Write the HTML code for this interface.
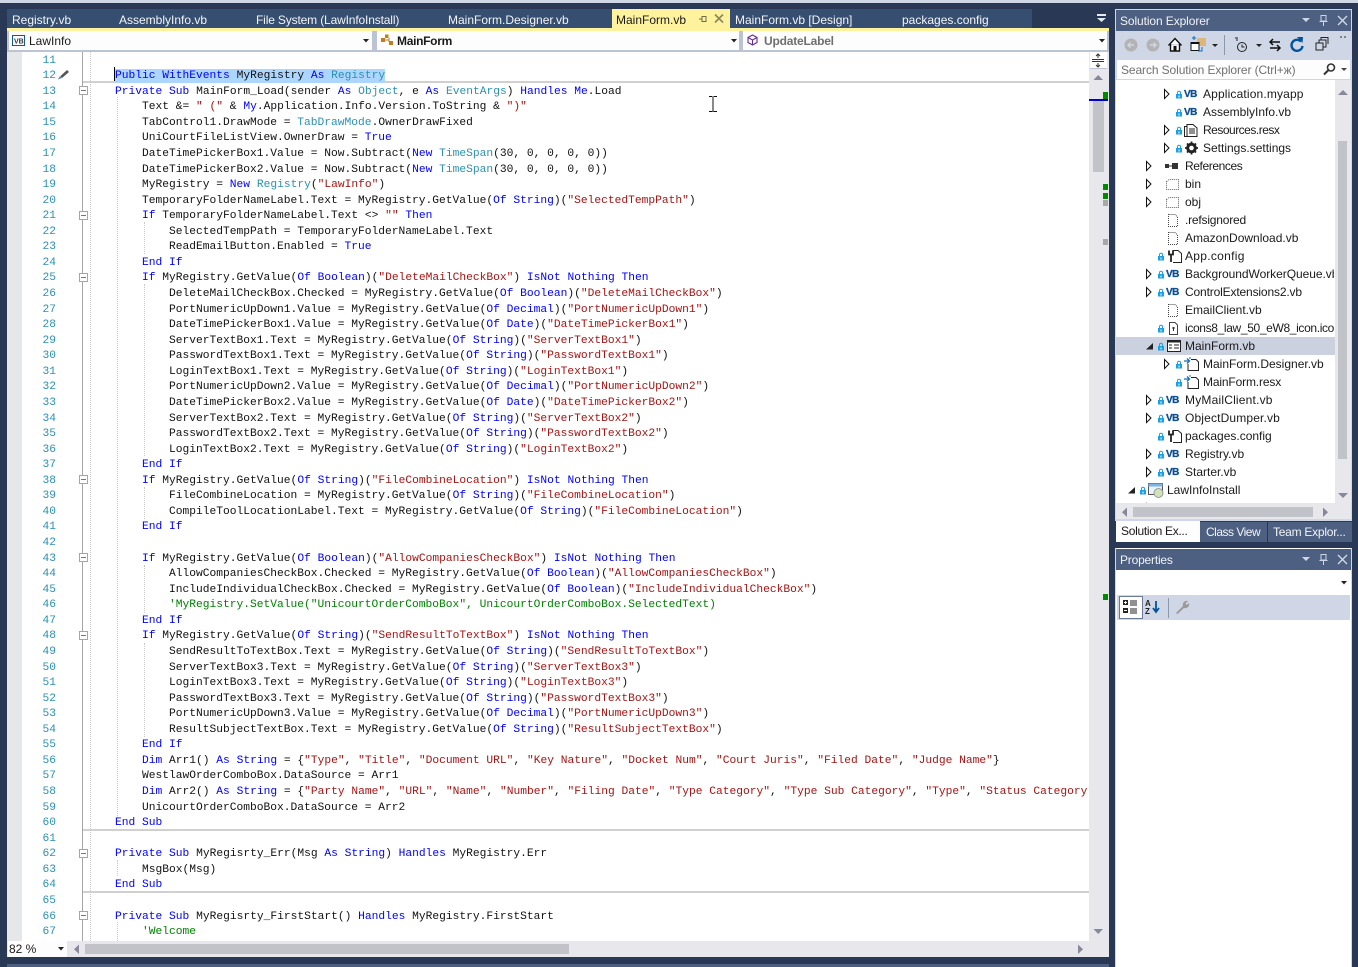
<!DOCTYPE html>
<html><head><meta charset="utf-8"><title>MainForm.vb</title>
<style>
html,body{margin:0;padding:0}
body{width:1358px;height:967px;position:relative;overflow:hidden;background:#293955;font-family:"Liberation Sans",sans-serif;font-size:12px;color:#1a1a1a}
.a{position:absolute}
.tab{position:absolute;top:12px;color:#f3f5f9;font-size:12px;line-height:16px;white-space:nowrap}
.nav{position:absolute;top:31px;height:19px;background:#fdfdfd}
.nt{position:absolute;top:33px;line-height:16px;white-space:nowrap}
pre{margin:0;font-family:"Liberation Mono",monospace;font-size:11.25px;line-height:15.57px;position:absolute;top:53.6px}
#code{left:88px;width:1001px;height:887.4px;overflow:hidden;color:#111}
#nums{left:22px;width:34px;text-align:right;color:#2b91af;height:887.4px;overflow:hidden}
.k{color:#0000ff}.t{color:#2b91af}.s{color:#a31515}.c{color:#008000}
.sel{background:#add6ff;padding:1px 0}
.g{position:absolute;width:0;border-left:1px dotted #c8c8c8}
.hl{position:absolute;left:83px;width:1006px;height:2px;background:#d0d0d0}
.box{position:absolute;left:79px;width:7px;height:7px;border:1px solid #a5a5a5;background:#fff}
.box:after{content:"";position:absolute;left:1px;top:3px;width:5px;height:1px;background:#777}
.r{position:absolute;left:1116px;width:218px;height:18px;line-height:18px;white-space:nowrap;overflow:hidden}
.r span.x{position:absolute;top:0}
.r svg{position:absolute;top:0}
.vb{position:absolute;font-weight:bold;font-size:10px;color:#0e4f92;top:1px;letter-spacing:-.6px;-webkit-text-stroke:.3px #0e4f92}
.pt{position:absolute;color:#f1f3f7;white-space:nowrap;line-height:16px}
</style></head><body>
<svg width="0" height="0" style="position:absolute">
<defs>
<symbol id="ar" viewBox="0 0 8 18"><path d="M1.5 4.5 L6 9 L1.5 13.5 Z" fill="#fff" stroke="#111"/></symbol>
<symbol id="ad" viewBox="0 0 10 18"><path d="M1 12.5 L8 12.5 L8 6 Z" fill="#222"/></symbol>
<symbol id="lk" viewBox="0 0 8 18"><rect x="0" y="9" width="6" height="4.5" fill="#1ba1e2"/><path d="M1.5 9.5V7.7a1.5 1.5 0 0 1 3 0V9.5" fill="none" stroke="#1ba1e2" stroke-width="1"/><rect x="2.5" y="10.5" width="1" height="2" fill="#fff"/></symbol>
<symbol id="dd" viewBox="0 0 14 18"><path d="M2.5 3.5H9L11.5 6V15.5H2.5Z" fill="none" stroke="#444" stroke-dasharray="1 1"/></symbol>
<symbol id="df" viewBox="0 0 16 18"><path d="M1.5 6.5L4 4.5H13.5V14.5H1.5Z" fill="none" stroke="#666" stroke-dasharray="1 1"/></symbol>
<symbol id="cfg" viewBox="0 0 18 18"><path d="M6.5 3.5H12L15.5 6.5V15.5H7" fill="#fff" stroke="#222"/><path d="M3 3.5V7.5H7V3.5M5 7.5V15" fill="none" stroke="#222" stroke-width="1.8"/></symbol>
<symbol id="ds" viewBox="0 0 18 18"><path d="M8 4.5H13L15.5 7V15.5H5V9" fill="#fff" stroke="#222"/><path d="M1 6H6M4 3.5L6.5 6L4 8.5" fill="none" stroke="#1a6fb5" stroke-width="1.3"/><path d="M7 2v2" stroke="#1a6fb5"/></symbol>
</defs></svg>

<!-- top strip -->
<div class="a" style="left:0;top:0;width:1358px;height:3px;background:#cfd6e5"></div>

<!-- tab strip -->
<div class="a" style="left:7px;top:9px;width:1025px;height:19px;background:#364e6f"></div>
<div class="a" style="left:612px;top:9px;width:118px;height:19px;background:#fff29d"></div>
<div class="a" style="left:7px;top:28px;width:1102px;height:3px;background:#fff29d"></div>
<div class="tab" style="left:12px">Registry.vb</div>
<div class="tab" style="left:119px">AssemblyInfo.vb</div>
<div class="tab" style="left:256px;letter-spacing:-.15px">File System (LawInfoInstall)</div>
<div class="tab" style="left:448px">MainForm.Designer.vb</div>
<div class="tab" style="left:616px;color:#1a1a1a">MainForm.vb</div>
<div class="tab" style="left:735px">MainForm.vb [Design]</div>
<div class="tab" style="left:902px">packages.config</div>
<svg class="a" style="left:696px;top:13px" width="30" height="12"><path d="M3 6H6M6 3.5H10V8.5H6ZM6 3V9" fill="none" stroke="#6d6a4a"/><path d="M19 1.5L27 9.5M27 1.5L19 9.5" stroke="#8a8660" stroke-width="1.6"/></svg>
<svg class="a" style="left:1097px;top:14px" width="10" height="9"><rect width="9" height="2" y="0" fill="#e6e9f0"/><path d="M0 4H9L4.5 8Z" fill="#e6e9f0"/></svg>

<!-- navigation bar -->
<div class="a" style="left:7px;top:31px;width:1102px;height:21px;background:#bcc4d4"></div>
<div class="nav" style="left:9px;width:363px"></div>
<div class="nav" style="left:377px;width:362px"></div>
<div class="nav" style="left:743px;width:364px"></div>
<svg class="a" style="left:12px;top:34px" width="14" height="13"><rect x=".5" y="1.5" width="12" height="10" fill="#fff" stroke="#0e5a9e"/><text x="2" y="9.5" font-family="Liberation Sans" font-size="7" font-weight="bold" fill="#333">VB</text></svg>
<div class="nt" style="left:29px">LawInfo</div>
<svg class="a" style="left:380px;top:33px" width="15" height="14"><path d="M1 5h4v4H1zM5 1.5h3.5v3.5H5zM9 8h4v4H9z" fill="#c27d1a"/><path d="M5 7H9M9 5V9" stroke="#c27d1a"/></svg>
<div class="nt" style="left:397px;font-weight:bold;letter-spacing:-.3px">MainForm</div>
<svg class="a" style="left:747px;top:34px" width="12" height="12"><path d="M5.5 1L10 3.5V8.5L5.5 11L1 8.5V3.5ZM1 3.5L5.5 6L10 3.5M5.5 6V11" fill="none" stroke="#652d90" stroke-width="1.1"/></svg>
<div class="nt" style="left:764px;font-weight:bold;color:#6f6f6f;letter-spacing:-.2px">UpdateLabel</div>
<svg class="a" style="left:362px;top:38px" width="8" height="6"><path d="M1 1H7L4 4.5Z" fill="#222"/></svg>
<svg class="a" style="left:730px;top:38px" width="8" height="6"><path d="M1 1H7L4 4.5Z" fill="#222"/></svg>
<svg class="a" style="left:1098px;top:38px" width="8" height="6"><path d="M1 1H7L4 4.5Z" fill="#222"/></svg>

<!-- editor -->
<div class="a" style="left:7px;top:52px;width:1102px;height:905px;background:#e8e8ec"></div>
<div class="a" style="left:8px;top:52px;width:14px;height:889px;background:#e6e7e8"></div>
<div class="a" style="left:22px;top:52px;width:1067px;height:889px;background:#fff"></div>
<div class="a" style="left:82px;top:52px;width:1px;height:889px;background:#a5a5a5"></div>

<!-- guides -->
<div class="g" style="left:90px;top:52px;height:889px"></div>
<div class="g" style="left:117px;top:97px;height:721px"></div>
<div class="g" style="left:117px;top:860px;height:16px"></div>
<div class="g" style="left:117px;top:922px;height:19px"></div>
<div class="g" style="left:144px;top:222px;height:32px"></div>
<div class="g" style="left:144px;top:284px;height:172px"></div>
<div class="g" style="left:144px;top:487px;height:32px"></div>
<div class="g" style="left:144px;top:565px;height:48px"></div>
<div class="g" style="left:144px;top:643px;height:94px"></div>

<div class="hl" style="top:81px"></div>
<div class="hl" style="top:829px"></div>
<div class="hl" style="top:891px"></div>

<div class="box" style="top:86px"></div>
<div class="box" style="top:211px"></div>
<div class="box" style="top:273px"></div>
<div class="box" style="top:475px"></div>
<div class="box" style="top:553px"></div>
<div class="box" style="top:631px"></div>
<div class="box" style="top:849px"></div>
<div class="box" style="top:911px"></div>

<pre id="nums">11
12
13
14
15
16
17
18
19
20
21
22
23
24
25
26
27
28
29
30
31
32
33
34
35
36
37
38
39
40
41
42
43
44
45
46
47
48
49
50
51
52
53
54
55
56
57
58
59
60
61
62
63
64
65
66
67</pre>
<svg class="a" style="left:57px;top:68px" width="14" height="13"><path d="M1 11.5L3 8L5 10Z" fill="#5a7fa8"/><path d="M3.5 8L10 2L12 4L5 10Z" fill="#555"/></svg>

<pre id="code">

    <span class="sel"><span class="k">Public</span> <span class="k">WithEvents</span> MyRegistry <span class="k">As</span> <span class="t">Registry</span></span>
    <span class="k">Private</span> <span class="k">Sub</span> MainForm_Load(sender <span class="k">As</span> <span class="t">Object</span>, e <span class="k">As</span> <span class="t">EventArgs</span>) <span class="k">Handles</span> <span class="k">Me</span>.Load
        Text &amp;= <span class="s">" ("</span> &amp; <span class="k">My</span>.Application.Info.Version.ToString &amp; <span class="s">")"</span>
        TabControl1.DrawMode = <span class="t">TabDrawMode</span>.OwnerDrawFixed
        UniCourtFileListView.OwnerDraw = <span class="k">True</span>
        DateTimePickerBox1.Value = Now.Subtract(<span class="k">New</span> <span class="t">TimeSpan</span>(30, 0, 0, 0, 0))
        DateTimePickerBox2.Value = Now.Subtract(<span class="k">New</span> <span class="t">TimeSpan</span>(30, 0, 0, 0, 0))
        MyRegistry = <span class="k">New</span> <span class="t">Registry</span>(<span class="s">"LawInfo"</span>)
        TemporaryFolderNameLabel.Text = MyRegistry.GetValue(<span class="k">Of</span> <span class="k">String</span>)(<span class="s">"SelectedTempPath"</span>)
        <span class="k">If</span> TemporaryFolderNameLabel.Text &lt;&gt; <span class="s">""</span> <span class="k">Then</span>
            SelectedTempPath = TemporaryFolderNameLabel.Text
            ReadEmailButton.Enabled = <span class="k">True</span>
        <span class="k">End</span> <span class="k">If</span>
        <span class="k">If</span> MyRegistry.GetValue(<span class="k">Of</span> <span class="k">Boolean</span>)(<span class="s">"DeleteMailCheckBox"</span>) <span class="k">IsNot</span> <span class="k">Nothing</span> <span class="k">Then</span>
            DeleteMailCheckBox.Checked = MyRegistry.GetValue(<span class="k">Of</span> <span class="k">Boolean</span>)(<span class="s">"DeleteMailCheckBox"</span>)
            PortNumericUpDown1.Value = MyRegistry.GetValue(<span class="k">Of</span> <span class="k">Decimal</span>)(<span class="s">"PortNumericUpDown1"</span>)
            DateTimePickerBox1.Value = MyRegistry.GetValue(<span class="k">Of</span> <span class="k">Date</span>)(<span class="s">"DateTimePickerBox1"</span>)
            ServerTextBox1.Text = MyRegistry.GetValue(<span class="k">Of</span> <span class="k">String</span>)(<span class="s">"ServerTextBox1"</span>)
            PasswordTextBox1.Text = MyRegistry.GetValue(<span class="k">Of</span> <span class="k">String</span>)(<span class="s">"PasswordTextBox1"</span>)
            LoginTextBox1.Text = MyRegistry.GetValue(<span class="k">Of</span> <span class="k">String</span>)(<span class="s">"LoginTextBox1"</span>)
            PortNumericUpDown2.Value = MyRegistry.GetValue(<span class="k">Of</span> <span class="k">Decimal</span>)(<span class="s">"PortNumericUpDown2"</span>)
            DateTimePickerBox2.Value = MyRegistry.GetValue(<span class="k">Of</span> <span class="k">Date</span>)(<span class="s">"DateTimePickerBox2"</span>)
            ServerTextBox2.Text = MyRegistry.GetValue(<span class="k">Of</span> <span class="k">String</span>)(<span class="s">"ServerTextBox2"</span>)
            PasswordTextBox2.Text = MyRegistry.GetValue(<span class="k">Of</span> <span class="k">String</span>)(<span class="s">"PasswordTextBox2"</span>)
            LoginTextBox2.Text = MyRegistry.GetValue(<span class="k">Of</span> <span class="k">String</span>)(<span class="s">"LoginTextBox2"</span>)
        <span class="k">End</span> <span class="k">If</span>
        <span class="k">If</span> MyRegistry.GetValue(<span class="k">Of</span> <span class="k">String</span>)(<span class="s">"FileCombineLocation"</span>) <span class="k">IsNot</span> <span class="k">Nothing</span> <span class="k">Then</span>
            FileCombineLocation = MyRegistry.GetValue(<span class="k">Of</span> <span class="k">String</span>)(<span class="s">"FileCombineLocation"</span>)
            CompileToolLocationLabel.Text = MyRegistry.GetValue(<span class="k">Of</span> <span class="k">String</span>)(<span class="s">"FileCombineLocation"</span>)
        <span class="k">End</span> <span class="k">If</span>

        <span class="k">If</span> MyRegistry.GetValue(<span class="k">Of</span> <span class="k">Boolean</span>)(<span class="s">"AllowCompaniesCheckBox"</span>) <span class="k">IsNot</span> <span class="k">Nothing</span> <span class="k">Then</span>
            AllowCompaniesCheckBox.Checked = MyRegistry.GetValue(<span class="k">Of</span> <span class="k">Boolean</span>)(<span class="s">"AllowCompaniesCheckBox"</span>)
            IncludeIndividualCheckBox.Checked = MyRegistry.GetValue(<span class="k">Of</span> <span class="k">Boolean</span>)(<span class="s">"IncludeIndividualCheckBox"</span>)
            <span class="c">'MyRegistry.SetValue("UnicourtOrderComboBox", UnicourtOrderComboBox.SelectedText)</span>
        <span class="k">End</span> <span class="k">If</span>
        <span class="k">If</span> MyRegistry.GetValue(<span class="k">Of</span> <span class="k">String</span>)(<span class="s">"SendResultToTextBox"</span>) <span class="k">IsNot</span> <span class="k">Nothing</span> <span class="k">Then</span>
            SendResultToTextBox.Text = MyRegistry.GetValue(<span class="k">Of</span> <span class="k">String</span>)(<span class="s">"SendResultToTextBox"</span>)
            ServerTextBox3.Text = MyRegistry.GetValue(<span class="k">Of</span> <span class="k">String</span>)(<span class="s">"ServerTextBox3"</span>)
            LoginTextBox3.Text = MyRegistry.GetValue(<span class="k">Of</span> <span class="k">String</span>)(<span class="s">"LoginTextBox3"</span>)
            PasswordTextBox3.Text = MyRegistry.GetValue(<span class="k">Of</span> <span class="k">String</span>)(<span class="s">"PasswordTextBox3"</span>)
            PortNumericUpDown3.Value = MyRegistry.GetValue(<span class="k">Of</span> <span class="k">Decimal</span>)(<span class="s">"PortNumericUpDown3"</span>)
            ResultSubjectTextBox.Text = MyRegistry.GetValue(<span class="k">Of</span> <span class="k">String</span>)(<span class="s">"ResultSubjectTextBox"</span>)
        <span class="k">End</span> <span class="k">If</span>
        <span class="k">Dim</span> Arr1() <span class="k">As</span> <span class="k">String</span> = {<span class="s">"Type"</span>, <span class="s">"Title"</span>, <span class="s">"Document URL"</span>, <span class="s">"Key Nature"</span>, <span class="s">"Docket Num"</span>, <span class="s">"Court Juris"</span>, <span class="s">"Filed Date"</span>, <span class="s">"Judge Name"</span>}
        WestlawOrderComboBox.DataSource = Arr1
        <span class="k">Dim</span> Arr2() <span class="k">As</span> <span class="k">String</span> = {<span class="s">"Party Name"</span>, <span class="s">"URL"</span>, <span class="s">"Name"</span>, <span class="s">"Number"</span>, <span class="s">"Filing Date"</span>, <span class="s">"Type Category"</span>, <span class="s">"Type Sub Category"</span>, <span class="s">"Type"</span>, <span class="s">"Status Category"</span>, <span class="s">"Status"</span>}
        UnicourtOrderComboBox.DataSource = Arr2
    <span class="k">End</span> <span class="k">Sub</span>

    <span class="k">Private</span> <span class="k">Sub</span> MyRegisrty_Err(Msg <span class="k">As</span> <span class="k">String</span>) <span class="k">Handles</span> MyRegistry.Err
        MsgBox(Msg)
    <span class="k">End</span> <span class="k">Sub</span>

    <span class="k">Private</span> <span class="k">Sub</span> MyRegisrty_FirstStart() <span class="k">Handles</span> MyRegistry.FirstStart
        <span class="c">'Welcome</span></pre>
<div class="a" style="left:114px;top:67px;width:1px;height:14px;background:#000"></div>

<!-- editor v-scroll -->
<div class="a" style="left:1089px;top:52px;width:19px;height:889px;background:#e8e8ec"></div>
<div class="a" style="left:1090px;top:52px;width:17px;height:16px;background:#fdfdfd;border-bottom:1px solid #bcc4d4"></div>
<svg class="a" style="left:1091px;top:53px" width="15" height="15"><path d="M1 6.5H13M1 8.5H13" stroke="#333"/><path d="M7 1V5M5 3L7 1L9 3M7 10V14M5 12L7 14L9 12" fill="none" stroke="#333"/></svg>
<svg class="a" style="left:1093px;top:74px" width="11" height="7"><path d="M0.5 6H10L5.2 1Z" fill="#868999"/></svg>
<div class="a" style="left:1103px;top:92px;width:5px;height:7px;background:#008a00"></div>
<div class="a" style="left:1089px;top:99px;width:19px;height:2px;background:#0000cc"></div>
<div class="a" style="left:1093px;top:101px;width:11px;height:71px;background:#c2c3c9"></div>
<div class="a" style="left:1103px;top:184px;width:5px;height:6px;background:#008a00"></div>
<div class="a" style="left:1103px;top:193px;width:5px;height:6px;background:#008a00"></div>
<div class="a" style="left:1103px;top:200px;width:5px;height:6px;background:#a8a8a8"></div>
<div class="a" style="left:1103px;top:239px;width:5px;height:6px;background:#a8a8a8"></div>
<div class="a" style="left:1103px;top:594px;width:5px;height:6px;background:#008a00"></div>
<svg class="a" style="left:1093px;top:928px" width="11" height="7"><path d="M0.5 1H10L5.2 6Z" fill="#868999"/></svg>

<!-- bottom bar -->
<div class="a" style="left:8px;top:941px;width:58px;height:16px;padding-left:1px;background:#fdfdfd;font-size:12px;line-height:16px;color:#1a1a1a">82 %</div>
<svg class="a" style="left:57px;top:946px" width="8" height="6"><path d="M1 1H7L4 4.5Z" fill="#222"/></svg>
<div class="a" style="left:67px;top:941px;width:1022px;height:16px;background:#e8e8ec"></div>
<svg class="a" style="left:73px;top:944px" width="7" height="11"><path d="M6 0.5V10L1 5.2Z" fill="#868999"/></svg>
<div class="a" style="left:85px;top:944px;width:484px;height:10px;background:#c2c3c9"></div>
<svg class="a" style="left:1077px;top:944px" width="7" height="11"><path d="M1 0.5V10L6 5.2Z" fill="#868999"/></svg>
<div class="a" style="left:7px;top:964px;width:1102px;height:3px;background:#4d6082"></div>

<!-- Solution Explorer -->
<div class="a" style="left:1115px;top:9px;width:237px;height:512px;background:#cfd6e5"></div>
<div class="a" style="left:1116px;top:10px;width:235px;height:21px;background:#4d6082"></div>
<div class="pt" style="left:1120px;top:13px;letter-spacing:-.1px">Solution Explorer</div>
<svg class="a" style="left:1301px;top:14px" width="48" height="13"><path d="M1 4H9L5 8Z" fill="#cfd6e5"/><path d="M20 1.5H25V7H20ZM18.5 7.5H26.5M22.5 8V12" fill="none" stroke="#cfd6e5"/><path d="M37 2L46 11M46 2L37 11" stroke="#cfd6e5" stroke-width="1.4"/></svg>

<!-- toolbar -->
<svg class="a" style="left:1122px;top:33px" width="228" height="26">
<circle cx="9" cy="12" r="6.5" fill="#b3b3b3"/><path d="M6 12H12M8.5 9.5L6 12L8.5 14.5" fill="none" stroke="#cfd6e5" stroke-width="1.4"/>
<circle cx="31" cy="12" r="6.5" fill="#b3b3b3"/><path d="M28 12H34M31.5 9.5L34 12L31.5 14.5" fill="none" stroke="#cfd6e5" stroke-width="1.4"/>
<path d="M46.5 12.5L53 5.5L59.5 12.5M48.5 11V18H57.5V11" fill="#fff" stroke="#111" stroke-width="1.4"/><rect x="51.5" y="13" width="3" height="5" fill="#111"/>
<rect x="75" y="5" width="9" height="8" fill="#dcb67a"/><rect x="69" y="9.5" width="8" height="8" fill="#fff" stroke="#111"/><rect x="69" y="9" width="8" height="2" fill="#111"/><path d="M70 5H74M72 3V7M80 14V18H76" stroke="#0e70c0" fill="none"/>
<path d="M90 11H96L93 14Z" fill="#222"/>
<rect x="102" y="2" width="1" height="20" fill="#8d97ab"/>
<circle cx="120" cy="14" r="4.5" fill="none" stroke="#222"/><path d="M120 11.5V14H122.5M113 5H116M115 6V8" stroke="#222" fill="none"/>
<path d="M134 11H140L137 14Z" fill="#222"/>
<path d="M148 9H158M151 6L148 9L151 12M148 15H158M155 12L158 15L155 18" fill="none" stroke="#111" stroke-width="1.5"/>
<path d="M179 8.5A5.5 5.5 0 1 0 180.5 13" fill="none" stroke="#00539c" stroke-width="2.4"/><path d="M175 4L181 4L180.5 10Z" fill="#00539c"/>
<path d="M194 10H201V17H194ZM197 10V7H204V14H201M199 7V4.5H206V11" fill="none" stroke="#222"/>
<path d="M219 3v2M223 3v2" stroke="#555" stroke-width="1.3"/>
</svg>

<!-- search -->
<div class="a" style="left:1117px;top:60px;width:233px;height:19px;background:#fdfdfd"></div>
<div class="a" style="left:1121px;top:62px;color:#717171;line-height:16px;white-space:nowrap;letter-spacing:-.1px">Search Solution Explorer (Ctrl+ж)</div>
<svg class="a" style="left:1322px;top:62px" width="26" height="14"><circle cx="9" cy="5.5" r="3.5" fill="none" stroke="#333" stroke-width="1.6"/><path d="M6.5 8L2 12.5" stroke="#333" stroke-width="2"/><path d="M19 6H25L22 9Z" fill="#444"/></svg>

<!-- tree -->
<div class="a" style="left:1116px;top:80px;width:219px;height:423px;background:#fff;overflow:hidden"></div>
<div class="a" style="left:1335px;top:80px;width:16px;height:423px;background:#e8e8ec"></div>
<svg class="a" style="left:1337px;top:89px" width="12" height="7"><path d="M1 6H11L6 1Z" fill="#868999"/></svg>
<div class="a" style="left:1338px;top:141px;width:9px;height:318px;background:#c2c3c9"></div>
<svg class="a" style="left:1337px;top:492px" width="12" height="7"><path d="M1 1H11L6 6Z" fill="#868999"/></svg>

<div class="a" style="left:1116px;top:337px;width:219px;height:18px;background:#ccd1e0"></div>

<div class="r" style="top:85px"><svg style="left:47px" width="8" height="18"><use href="#ar"/></svg><svg style="left:60px" width="8" height="18"><use href="#lk"/></svg><span class="vb" style="left:68px">VB</span><span class="x" style="left:87px;letter-spacing:.15px">Application.myapp</span></div>
<div class="r" style="top:103px"><svg style="left:60px" width="8" height="18"><use href="#lk"/></svg><span class="vb" style="left:68px">VB</span><span class="x" style="left:87px">AssemblyInfo.vb</span></div>
<div class="r" style="top:121px"><svg style="left:47px" width="8" height="18"><use href="#ar"/></svg><svg style="left:60px" width="8" height="18"><use href="#lk"/></svg><svg style="left:67px" width="16" height="18"><path d="M1.5 5.5H4V3.5H10L14 7V15.5H1.5Z" fill="#fff" stroke="#222"/><path d="M4 4V15M6 8H12M6 10H12M6 12H12" stroke="#222"/></svg><span class="x" style="left:87px;letter-spacing:-.5px">Resources.resx</span></div>
<div class="r" style="top:139px"><svg style="left:60px" width="8" height="18"><use href="#lk"/></svg><svg style="left:47px" width="8" height="18"><use href="#ar"/></svg><svg style="left:68px" width="16" height="18"><circle cx="7.5" cy="9" r="4" fill="none" stroke="#222" stroke-width="2.6"/><path d="M7.5 2.5V15.5M1 9H14M3 4.5L12 13.5M12 4.5L3 13.5" stroke="#222" stroke-width="1.8"/><circle cx="7.5" cy="9" r="2.3" fill="#fff"/></svg><span class="x" style="left:87px">Settings.settings</span></div>
<div class="r" style="top:157px"><svg style="left:29px" width="8" height="18"><use href="#ar"/></svg><svg style="left:48px" width="16" height="18"><rect x="1" y="7" width="4" height="4" fill="#333"/><path d="M5 9H8" stroke="#333"/><rect x="8" y="6" width="6" height="6" fill="#333"/></svg><span class="x" style="left:69px;letter-spacing:-.4px">References</span></div>
<div class="r" style="top:175px"><svg style="left:29px" width="8" height="18"><use href="#ar"/></svg><svg style="left:49px" width="16" height="18"><use href="#df"/></svg><span class="x" style="left:69px">bin</span></div>
<div class="r" style="top:193px"><svg style="left:29px" width="8" height="18"><use href="#ar"/></svg><svg style="left:49px" width="16" height="18"><use href="#df"/></svg><span class="x" style="left:69px">obj</span></div>
<div class="r" style="top:211px"><svg style="left:50px" width="14" height="18"><use href="#dd"/></svg><span class="x" style="left:69px;letter-spacing:-.2px">.refsignored</span></div>
<div class="r" style="top:229px"><svg style="left:50px" width="14" height="18"><use href="#dd"/></svg><span class="x" style="left:69px">AmazonDownload.vb</span></div>
<div class="r" style="top:247px"><svg style="left:42px" width="8" height="18"><use href="#lk"/></svg><svg style="left:50px" width="18" height="18"><use href="#cfg"/></svg><span class="x" style="left:69px;letter-spacing:.3px">App.config</span></div>
<div class="r" style="top:265px"><svg style="left:29px" width="8" height="18"><use href="#ar"/></svg><svg style="left:42px" width="8" height="18"><use href="#lk"/></svg><span class="vb" style="left:50px">VB</span><span class="x" style="left:69px;letter-spacing:-.05px">BackgroundWorkerQueue.vb</span></div>
<div class="r" style="top:283px"><svg style="left:29px" width="8" height="18"><use href="#ar"/></svg><svg style="left:42px" width="8" height="18"><use href="#lk"/></svg><span class="vb" style="left:50px">VB</span><span class="x" style="left:69px;letter-spacing:-.15px">ControlExtensions2.vb</span></div>
<div class="r" style="top:301px"><svg style="left:50px" width="14" height="18"><use href="#dd"/></svg><span class="x" style="left:69px">EmailClient.vb</span></div>
<div class="r" style="top:319px"><svg style="left:42px" width="8" height="18"><use href="#lk"/></svg><svg style="left:50px" width="14" height="18"><path d="M3.5 3.5H9L11.5 6V15.5H3.5Z" fill="#fff" stroke="#444"/><path d="M6 9H9M7.5 8V12" stroke="#333"/></svg><span class="x" style="left:69px;letter-spacing:-.35px">icons8_law_50_eW8_icon.ico</span></div>
<div class="r" style="top:337px"><svg style="left:29px" width="10" height="18"><use href="#ad"/></svg><svg style="left:42px" width="8" height="18"><use href="#lk"/></svg><svg style="left:50px" width="16" height="18"><rect x="1.5" y="3.5" width="13" height="11" fill="#fff" stroke="#222"/><rect x="1.5" y="3.5" width="13" height="2" fill="#222"/><path d="M3 8H6M3 11H6M8 8H13M8 11H13" stroke="#222"/></svg><span class="x" style="left:69px">MainForm.vb</span></div>
<div class="r" style="top:355px"><svg style="left:47px" width="8" height="18"><use href="#ar"/></svg><svg style="left:60px" width="8" height="18"><use href="#lk"/></svg><svg style="left:67px" width="18" height="18"><use href="#ds"/></svg><span class="x" style="left:87px">MainForm.Designer.vb</span></div>
<div class="r" style="top:373px"><svg style="left:60px" width="8" height="18"><use href="#lk"/></svg><svg style="left:67px" width="18" height="18"><use href="#ds"/></svg><span class="x" style="left:87px;letter-spacing:-.15px">MainForm.resx</span></div>
<div class="r" style="top:391px"><svg style="left:29px" width="8" height="18"><use href="#ar"/></svg><svg style="left:42px" width="8" height="18"><use href="#lk"/></svg><span class="vb" style="left:50px">VB</span><span class="x" style="left:69px;letter-spacing:.2px">MyMailClient.vb</span></div>
<div class="r" style="top:409px"><svg style="left:29px" width="8" height="18"><use href="#ar"/></svg><svg style="left:42px" width="8" height="18"><use href="#lk"/></svg><span class="vb" style="left:50px">VB</span><span class="x" style="left:69px;letter-spacing:.15px">ObjectDumper.vb</span></div>
<div class="r" style="top:427px"><svg style="left:42px" width="8" height="18"><use href="#lk"/></svg><svg style="left:50px" width="18" height="18"><use href="#cfg"/></svg><span class="x" style="left:69px">packages.config</span></div>
<div class="r" style="top:445px"><svg style="left:29px" width="8" height="18"><use href="#ar"/></svg><svg style="left:42px" width="8" height="18"><use href="#lk"/></svg><span class="vb" style="left:50px">VB</span><span class="x" style="left:69px">Registry.vb</span></div>
<div class="r" style="top:463px"><svg style="left:29px" width="8" height="18"><use href="#ar"/></svg><svg style="left:42px" width="8" height="18"><use href="#lk"/></svg><span class="vb" style="left:50px">VB</span><span class="x" style="left:69px">Starter.vb</span></div>
<div class="r" style="top:481px"><svg style="left:11px" width="10" height="18"><use href="#ad"/></svg><svg style="left:24px" width="8" height="18"><use href="#lk"/></svg><svg style="left:32px" width="16" height="18"><rect x=".5" y="2.5" width="14" height="11" fill="#eaf2fb" stroke="#555"/><rect x=".5" y="2.5" width="14" height="3" fill="#7fb2e5"/><circle cx="10.5" cy="12" r="4.5" fill="#cfe3b8" stroke="#999"/></svg><span class="x" style="left:51px">LawInfoInstall</span></div>
<div class="r" style="top:499px"><svg style="left:29px" width="8" height="18"><use href="#ar"/></svg><svg style="left:49px" width="16" height="18"><circle cx="8" cy="9" r="5" fill="#d9c9a8"/></svg><span class="x" style="left:69px">Detected Dependencies</span></div>

<!-- h-scroll -->
<div class="a" style="left:1116px;top:503px;width:235px;height:16px;background:#e8e8ec"></div>
<svg class="a" style="left:1121px;top:507px" width="7" height="11"><path d="M6 0.5V10L1 5.2Z" fill="#868999"/></svg>
<div class="a" style="left:1133px;top:507px;width:180px;height:10px;background:#c2c3c9"></div>
<svg class="a" style="left:1322px;top:507px" width="7" height="11"><path d="M1 0.5V10L6 5.2Z" fill="#868999"/></svg>

<!-- tool tabs -->
<div class="a" style="left:1115px;top:521px;width:237px;height:21px;background:#293955"></div>
<div class="a" style="left:1116px;top:521px;width:84px;height:21px;background:#fdfdfd"></div>
<div class="a" style="left:1121px;top:523px;line-height:16px;white-space:nowrap;letter-spacing:-.3px">Solution Ex...</div>
<div class="a" style="left:1200px;top:522px;width:67px;height:20px;background:#4d6082"></div>
<div class="pt" style="left:1206px;top:524px;letter-spacing:-.5px">Class View</div>
<div class="a" style="left:1268px;top:522px;width:84px;height:20px;background:#4d6082"></div>
<div class="pt" style="left:1273px;top:524px;letter-spacing:-.25px">Team Explor...</div>

<!-- Properties -->
<div class="a" style="left:1115px;top:548px;width:237px;height:419px;background:#fff;border-left:1px solid #cfd6e5;box-sizing:border-box;border-right:1px solid #cfd6e5"></div>
<div class="a" style="left:1116px;top:549px;width:235px;height:21px;background:#4d6082"></div>
<div class="pt" style="left:1120px;top:552px;letter-spacing:-.2px">Properties</div>
<svg class="a" style="left:1301px;top:553px" width="48" height="13"><path d="M1 4H9L5 8Z" fill="#cfd6e5"/><path d="M20 1.5H25V7H20ZM18.5 7.5H26.5M22.5 8V12" fill="none" stroke="#cfd6e5"/><path d="M37 2L46 11M46 2L37 11" stroke="#cfd6e5" stroke-width="1.4"/></svg>
<svg class="a" style="left:1340px;top:580px" width="8" height="6"><path d="M1 1H7L4 4.5Z" fill="#222"/></svg>
<div class="a" style="left:1117px;top:595px;width:233px;height:25px;background:#cfd6e5"></div>
<div class="a" style="left:1119px;top:596px;width:22px;height:21px;background:#fdfdfd;border:1px solid #6b7a99"></div>
<svg class="a" style="left:1122px;top:599px" width="18" height="16"><path d="M1 1h5v5H1zM1 9h5v5H1z" fill="#222"/><path d="M2 3.5h3M3.5 2v3M2 11.5h3" stroke="#fff"/><path d="M8 2h7M8 4h7M8 6h7M8 10h7M8 12h7M8 14h7" stroke="#222"/></svg>
<svg class="a" style="left:1145px;top:599px" width="17" height="16"><text x="0" y="7" font-family="Liberation Sans" font-size="8" font-weight="bold" fill="#222">A</text><text x="0" y="15" font-family="Liberation Sans" font-size="8" font-weight="bold" fill="#222">Z</text><path d="M11 2V12M8 9L11 13L14 9" fill="none" stroke="#00539c" stroke-width="1.8"/></svg>
<div class="a" style="left:1168px;top:598px;width:1px;height:20px;background:#8d97ab"></div>
<svg class="a" style="left:1174px;top:599px" width="16" height="16"><path d="M2 14L9 7A4 4 0 0 1 14 2L11.5 4.5L12.5 6L15 4A4 4 0 0 1 10 9L3.5 15Z" fill="#9a9a9a"/></svg>

<!-- cursor -->
<svg class="a" style="left:708px;top:96px" width="10" height="17"><path d="M1 .5H4.5M5.5 .5H9M5 1V15.5M1 15.5H4.5M5.5 15.5H9" fill="none" stroke="#111"/></svg>
</body></html>
